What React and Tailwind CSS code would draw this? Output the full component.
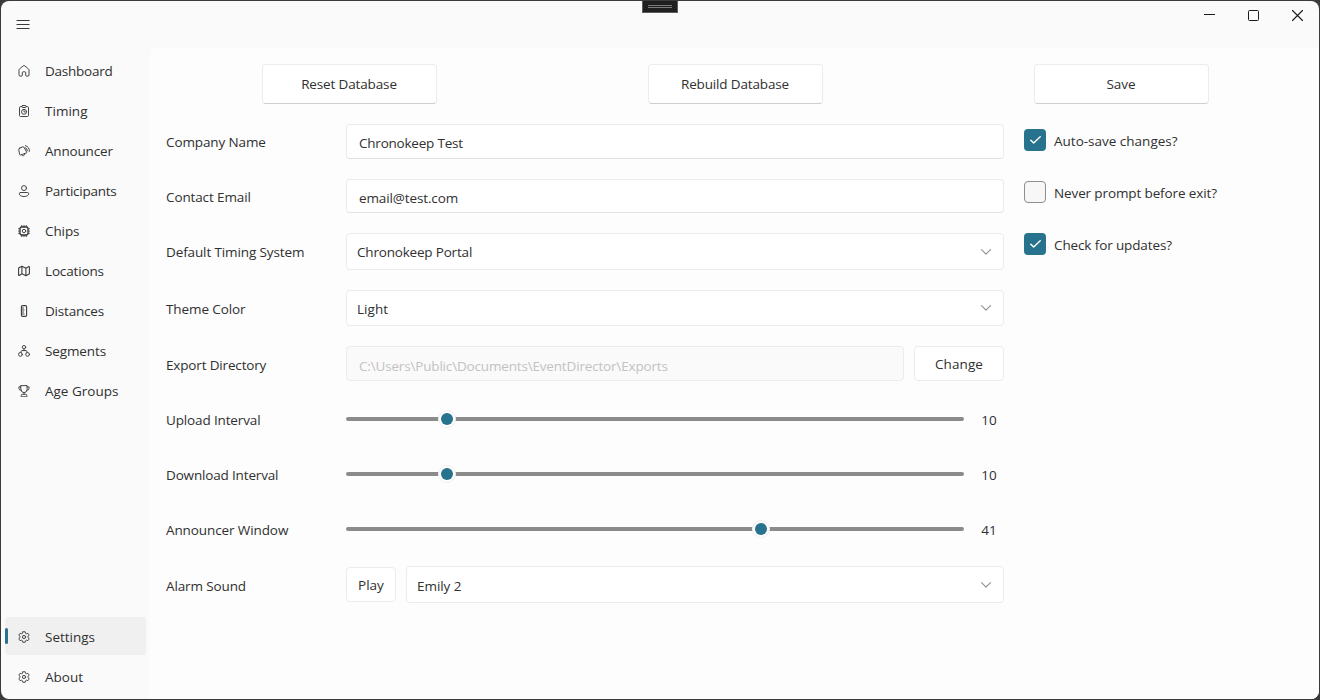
import React from 'react';

function Icon({ children }) {
  return (
    <svg className="size-3 shrink-0" viewBox="0 0 12 12" fill="none" stroke="#3c3c3c" strokeWidth="0.95" strokeLinecap="round" strokeLinejoin="round">
      {children}
    </svg>
  );
}

const icons = {
  home: (
    <Icon>
      <path d="M1 5.1a1.4 1.4 0 0 1 .45-1l3.7-3.2a1.3 1.3 0 0 1 1.7 0l3.7 3.2a1.4 1.4 0 0 1 .45 1v5a1 1 0 0 1-1 1H8.3a.6.6 0 0 1-.6-.6V7.6a.8.8 0 0 0-.8-.8H5.1a.8.8 0 0 0-.8.8v2.9a.6.6 0 0 1-.6.6H2a1 1 0 0 1-1-1z" />
    </Icon>
  ),
  clipboard: (
    <Icon>
      <path d="M3.8 1.6H2.6a1.1 1.1 0 0 0-1.1 1.1v7.7a1.1 1.1 0 0 0 1.1 1.1h6.8a1.1 1.1 0 0 0 1.1-1.1V2.7a1.1 1.1 0 0 0-1.1-1.1H8.2" />
      <rect x="3.9" y="0.5" width="4.2" height="2" rx="0.9" />
      <circle cx="6" cy="6.8" r="2.5" />
      <path d="M6 5.7v1.2h.9" />
    </Icon>
  ),
  megaphone: (
    <Icon>
      <path d="M1.9 3 4.6 1.9a1.2 1.2 0 0 1 1.4.4L8.6 7a.8.8 0 0 1-.5 1.1L2.6 10a.8.8 0 0 1-1-.6L.8 4.9A1.6 1.6 0 0 1 1.9 3z" />
      <path d="M3.6 9.8a1.6 1.6 0 0 0 3-1.1M7.4.6a5 5 0 0 1 4 5.8M7.2 2.6a3.1 3.1 0 0 1 2.2 3.2" />
    </Icon>
  ),
  person: (
    <Icon>
      <circle cx="6" cy="3.1" r="2.5" />
      <path d="M2.5 7.5h7a1.2 1.2 0 0 1 1.2 1.2c0 1.8-2.2 2.8-4.7 2.8s-4.7-1-4.7-2.8a1.2 1.2 0 0 1 1.2-1.2z" />
    </Icon>
  ),
  chip: (
    <Icon>
      <rect x="2" y="2" width="8" height="8" rx="1.4" strokeWidth="1.3" />
      <circle cx="6" cy="6" r="1.7" />
      <path strokeWidth="1.1" d="M3.8 2V.6M6 2V.6M8.2 2V.6M3.8 11.4V10M6 11.4V10M8.2 11.4V10M2 3.8H.6M2 6H.6M2 8.2H.6M11.4 3.8H10M11.4 6H10M11.4 8.2H10" />
    </Icon>
  ),
  map: (
    <Icon>
      <path strokeWidth="1.1" d="M.6 3.1 3.9 1.3 7.9 3.2 10.8 1.6a.4.4 0 0 1 .6.4v6.8L8 10.7 4 8.8 1.2 10.4a.4.4 0 0 1-.6-.4zM3.9 1.3v7.4M7.9 3.2v7.4" />
    </Icon>
  ),
  ruler: (
    <Icon>
      <rect x="3.4" y="0.6" width="5.2" height="10.8" rx="1.1" strokeWidth="1.1" />
      <path d="M3.6 3h1.9M3.6 5h2.5M3.6 7h1.9M3.6 9h2.5" />
    </Icon>
  ),
  org: (
    <Icon>
      <circle cx="6" cy="2.2" r="1.7" />
      <circle cx="2.4" cy="9.4" r="1.9" />
      <circle cx="9.6" cy="9.4" r="1.9" />
      <path d="M6 3.9v1.7M3 7.5V6.6a1 1 0 0 1 1-1h4a1 1 0 0 1 1 1v.9" />
    </Icon>
  ),
  trophy: (
    <Icon>
      <path d="M2.9.6h6.2v3.9a3.1 3.1 0 0 1-6.2 0zM2.9 1.9H.9v1.4a2 2 0 0 0 2 2M9.1 1.9h2v1.4a2 2 0 0 1-2 2M6 7.6v1.7M3.2 11.4v-.8a1.3 1.3 0 0 1 1.3-1.3h3a1.3 1.3 0 0 1 1.3 1.3v.8z" />
    </Icon>
  ),
  gear: (
    <Icon>
      <path d="M4.8.8a5.6 5.6 0 0 1 2.4 0l.3 1.4 1 .6 1.4-.5a5.4 5.4 0 0 1 1.2 2.1L10 5.4v1.2l1.1 1a5.4 5.4 0 0 1-1.2 2.1l-1.4-.5-1 .6-.3 1.4a5.6 5.6 0 0 1-2.4 0l-.3-1.4-1-.6-1.4.5A5.4 5.4 0 0 1 .9 7.6l1.1-1V5.4l-1.1-1a5.4 5.4 0 0 1 1.2-2.1l1.4.5 1-.6z" />
      <circle cx="6" cy="6" r="1.6" />
    </Icon>
  ),
};

const mainNav = [
  { label: 'Dashboard', icon: 'home', track: 'tracking-[-0.25px]' },
  { label: 'Timing', icon: 'clipboard', track: 'tracking-[0.02px]' },
  { label: 'Announcer', icon: 'megaphone', track: 'tracking-[-0.18px]' },
  { label: 'Participants', icon: 'person', track: 'tracking-[-0.25px]' },
  { label: 'Chips', icon: 'chip', track: 'tracking-[-0.1px]' },
  { label: 'Locations', icon: 'map', track: 'tracking-[-0.15px]' },
  { label: 'Distances', icon: 'ruler', track: 'tracking-[-0.2px]' },
  { label: 'Segments', icon: 'org', track: 'tracking-[-0.12px]' },
  { label: 'Age Groups', icon: 'trophy', track: 'tracking-normal' },
];

const footerNav = [
  { label: 'Settings', icon: 'gear', track: 'tracking-normal', active: true },
  { label: 'About', icon: 'gear', track: 'tracking-normal' },
];

function NavItem({ label, icon, track, active }) {
  return (
    <div className={`flex h-[38px] items-center rounded-l ${active ? 'bg-[#f0f0f0]' : ''}`}>
      <span className={`h-4 w-[3px] rounded-full ${active ? 'bg-[#27728c]' : ''}`} />
      <span className="ml-[10px] flex">{icons[icon]}</span>
      <span className={`ml-[15px] ${track}`}>{label}</span>
    </div>
  );
}

function FooterNavItem({ label, icon, track, active }) {
  return (
    <div className={`flex h-[38px] items-center rounded-l ${active ? 'bg-[#f0f0f0]' : ''}`}>
      <span className={`h-4 w-[3px] rounded-full ${active ? 'bg-[#27728c]' : ''}`} />
      <span className="ml-[10px] flex pt-0.5">{icons[icon]}</span>
      <span className={`ml-[15px] pt-0.5 ${track}`}>{label}</span>
    </div>
  );
}

function BigButton({ label, track }) {
  return (
    <div className="flex flex-1 justify-center">
      <button className={`h-10 w-[175px] rounded border border-[#ececec] border-b-[#cfcfcf] bg-white ${track}`}>{label}</button>
    </div>
  );
}

function Row({ label, track, height, children }) {
  return (
    <div className={`flex items-center ${height}`}>
      <span className={`w-[180px] shrink-0 ${track}`}>{label}</span>
      <div className="flex flex-1 items-center">{children}</div>
    </div>
  );
}

function TextBox({ value, track, height }) {
  return (
    <div className={`flex flex-1 items-center rounded border border-[#ececec] border-b-[#e2e2e2] bg-white px-3 ${height} ${track}`}>
      {value}
    </div>
  );
}

function Select({ value, track, height }) {
  return (
    <div className={`flex flex-1 items-center justify-between rounded border border-[#ececec] bg-white pl-2.5 pr-3 ${height}`}>
      <span className={track}>{value}</span>
      <svg className="h-[6px] w-[10px]" viewBox="0 0 10 6" fill="none" stroke="#909090" strokeWidth="1.1" strokeLinecap="round" strokeLinejoin="round">
        <path d="M0.5 0.7 5 5.2 9.5 0.7" />
      </svg>
    </div>
  );
}

function Slider({ value, position }) {
  return (
    <>
      <div className="relative h-[18px] w-[618px]">
        <div className="mt-[7px] h-1 rounded-full bg-[#8b8b8b]" />
        <div
          className="absolute top-0 flex size-[18px] -translate-x-1/2 items-center justify-center rounded-full border border-[#efefef] bg-white"
          style={{ left: position }}
        >
          <div className="size-3 rounded-full bg-[#27728c]" />
        </div>
      </div>
      <span className="w-[50px] pt-[3px] text-center">{value}</span>
    </>
  );
}

function Check({ label, track, checked }) {
  return (
    <div className="flex h-[22px] items-center">
      <div className={`flex size-[22px] items-center justify-center rounded ${checked ? 'bg-[#27728c]' : 'border border-[#8d8d8d] bg-[#f7f7f7]'}`}>
        {checked && (
          <svg className="h-2 w-[11px]" viewBox="0 0 11 8" fill="none" stroke="#fff" strokeWidth="1.4" strokeLinecap="round" strokeLinejoin="round">
            <path d="M0.8 4.2 3.7 7.1 10.2 0.8" />
          </svg>
        )}
      </div>
      <span className={`ml-2 pt-[3px] ${track}`}>{label}</span>
    </div>
  );
}

export default function App() {
  return (
    <div className="h-[700px] w-[1320px] overflow-hidden bg-[#3a3a3a] p-px font-['Open_Sans','Noto_Sans',sans-serif] text-[13.5px] leading-[19px] whitespace-nowrap text-[#303030]">
      <div className="relative flex h-full flex-col overflow-hidden rounded-lg bg-[#fafafa]">
        <header className="flex h-[47px] shrink-0 justify-between">
          <svg className="mt-[18px] ml-[15px] h-[11px] w-[14px]" viewBox="0 0 14 11" stroke="#3a3a3a" strokeWidth="1">
            <path d="M0.5 1.5h13M0.5 5.5h13M0.5 9.5h13" />
          </svg>
          <div className="mr-4 flex gap-[33px] pt-[9px]">
            <svg className="size-[11px]" viewBox="0 0 11 11" stroke="#1b1b1b"><path d="M0 4.5h11" /></svg>
            <svg className="size-[11px]" viewBox="0 0 11 11" fill="none" stroke="#1b1b1b"><rect x="0.5" y="0.5" width="10" height="10" rx="1" /></svg>
            <svg className="size-[11px]" viewBox="0 0 11 11" stroke="#1b1b1b" strokeWidth="1.1" strokeLinecap="round"><path d="M0.5 0.5l10 10M10.5 0.5l-10 10" /></svg>
          </div>
        </header>
        <div className="flex min-h-0 flex-1">
          <nav className="flex w-[149px] shrink-0 flex-col justify-between pt-1 pr-1 pb-1 pl-1">
            <div className="flex flex-col gap-0.5">
              {mainNav.map((item) => <NavItem key={item.label} {...item} />)}
            </div>
            <div className="flex flex-col gap-0.5">
              {footerNav.map((item) => <FooterNavItem key={item.label} {...item} />)}
            </div>
          </nav>
          <main className="flex-1 rounded-tl-lg bg-[#fdfdfd] pt-4">
            <div className="ml-1.5 flex w-[1158px]">
              <BigButton label="Reset Database" track="tracking-[-0.14px]" />
              <BigButton label="Rebuild Database" track="tracking-[-0.15px]" />
              <BigButton label="Save" track="tracking-normal" />
            </div>
            <div className="flex pt-2.5 pl-4">
              <div className="w-[838px]">
                <Row label="Company Name" track="pt-px tracking-[-0.12px]" height="h-[55px]">
                  <TextBox value="Chronokeep Test" track="pt-[3px] tracking-[-0.22px]" height="h-[35px]" />
                </Row>
                <Row label="Contact Email" track="pt-[3px] tracking-[-0.12px]" height="h-[54px]">
                  <TextBox value="email@test.com" track="pt-[5px] tracking-[-0.12px]" height="h-[34px]" />
                </Row>
                <Row label="Default Timing System" track="pt-px tracking-[-0.12px]" height="h-[57px]">
                  <Select value="Chronokeep Portal" track="pt-px tracking-[-0.19px]" height="h-[37px]" />
                </Row>
                <Row label="Theme Color" track="pt-[3px] tracking-[-0.1px]" height="h-[56px]">
                  <Select value="Light" track="pt-[3px] tracking-[0.05px]" height="h-[36px]" />
                </Row>
                <Row label="Export Directory" track="pt-[3px] tracking-[-0.16px]" height="h-[55px]">
                  <div className="flex h-[35px] w-[558px] items-center rounded border border-[#ececec] bg-[#fafafa] px-3 pt-[5px] tracking-[-0.17px] text-[#c2c2c2]">
                    {'C:\\Users\\Public\\Documents\\EventDirector\\Exports'}
                  </div>
                  <button className="ml-2.5 h-[35px] w-[90px] rounded border border-[#ececec] bg-white pt-0.5 tracking-[0.1px]">Change</button>
                </Row>
                <Row label="Upload Interval" track="pt-[3px] tracking-[-0.14px]" height="h-[55px]">
                  <Slider value="10" position={101} />
                </Row>
                <Row label="Download Interval" track="pt-[3px] tracking-[-0.16px]" height="h-[55px]">
                  <Slider value="10" position={101} />
                </Row>
                <Row label="Announcer Window" track="pt-[3px] tracking-[-0.1px]" height="h-[55px]">
                  <Slider value="41" position={415} />
                </Row>
                <Row label="Alarm Sound" track="pt-[3px] tracking-[-0.12px]" height="h-[57px]">
                  <button className="mr-2.5 h-[35px] w-[50px] rounded border border-[#ececec] bg-white pt-0.5">Play</button>
                  <Select value="Emily 2" track="pt-[3px] tracking-[-0.05px]" height="h-[37px]" />
                </Row>
              </div>
              <div className="ml-5 flex flex-col gap-[30px] pt-[15px]">
                <Check label="Auto-save changes?" track="tracking-normal" checked />
                <Check label="Never prompt before exit?" track="tracking-[-0.12px]" />
                <Check label="Check for updates?" track="tracking-[-0.12px]" checked />
              </div>
            </div>
          </main>
        </div>
        <div className="absolute -top-px left-[641px] flex h-[13px] w-9 flex-col items-center gap-px border border-[#5c5c5c] bg-[#1f1f1f] pt-1">
          <div className="h-px w-6 shrink-0 bg-[#7a7a7a]" />
          <div className="h-px w-6 shrink-0 bg-[#7a7a7a]" />
        </div>
      </div>
    </div>
  );
}
